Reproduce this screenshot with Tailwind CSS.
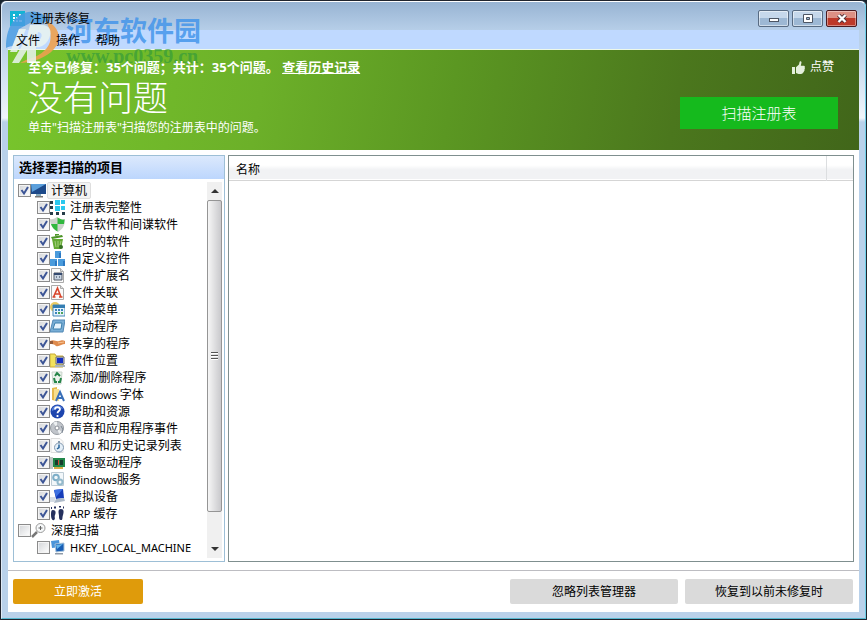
<!DOCTYPE html>
<html lang="zh-CN">
<head>
<meta charset="utf-8">
<title>注册表修复</title>
<script src="https://cdn.jsdelivr.net/npm/@tailwindcss/browser@4"></script>
</head>
<body class="h-screen overflow-hidden bg-[#16222c] font-['Noto_Sans','Noto_Sans_CJK_SC',sans-serif] text-xs text-black">
<div class="relative flex h-full flex-col rounded-t-md border border-[#20242e] bg-[#b9d1ea]">
 <div class="flex min-h-0 flex-1 flex-col rounded-t-md border border-t-white border-r-[#6fd0e8] border-b-[#55b8d0] border-l-[#dfeaf6] bg-[linear-gradient(to_bottom,#b9d1ea_40px,#f0f5fa_116px,#b9d1ea_120px)] px-[6px] pb-[6px]">

  <header class="-mx-[6px] flex h-7 shrink-0 items-center rounded-t-md bg-linear-to-b from-[#98b4d3] to-[#b6cee8] pr-2 pl-2">
   <svg class="mt-1 size-[15px]" viewBox="0 0 15 15"><path fill="#13b4d4" d="M0 0h15v15H0z"/><path fill="#fff" d="M3 3h2v2H3zM3 6h2v2H3zM3 9h2v2H3zM6 6h2v2H6zM6 9h2v2H6zM9 3h2v2H9zM9 9h3v2H9z"/></svg>
   <h1 class="relative z-20 mt-[5px] ml-[5px]">注册表修复</h1>
   <div class="mt-[5px] ml-auto flex gap-[3px]">
    <button aria-label="最小化" class="grid h-[17px] w-[31px] place-items-center rounded-xs border border-[#586b82] bg-linear-to-b from-[#c6d8eb] from-50% to-[#9db8d4] to-50% ring-1 ring-white/50 ring-inset"><svg class="h-[9px] w-3" viewBox="0 0 12 9"><rect x="1.5" y="4.5" width="9" height="3" fill="#fff" stroke="#4c5563"/></svg></button>
    <button aria-label="最大化" class="grid h-[17px] w-[31px] place-items-center rounded-xs border border-[#586b82] bg-linear-to-b from-[#c6d8eb] from-50% to-[#9db8d4] to-50% ring-1 ring-white/50 ring-inset"><svg class="h-[9px] w-3" viewBox="0 0 12 9"><path fill="#fff" fill-rule="evenodd" stroke="#4c5563" d="M1.500.5h9v8h-9zM4.500 3.500v2h3v-2z"/></svg></button>
    <button aria-label="关闭" class="grid h-[17px] w-[31px] place-items-center rounded-xs border border-[#4b1a20] bg-linear-to-b from-[#dc9084] from-50% to-[#bd3929] to-50% ring-1 ring-white/40 ring-inset"><svg class="h-[9px] w-3" viewBox="0 0 12 9"><path d="M2.500 1l7 7M9.500 1l-7 7" stroke="#4c3038" stroke-width="4"/><path d="M2.500 1l7 7M9.500 1l-7 7" stroke="#fff" stroke-width="2.400"/></svg></button>
   </div>
  </header>

  <nav class="flex h-5 shrink-0 items-center gap-4 border-b border-[#eef8e8] bg-[#bfd9ff] pt-[2px] pl-2">
   <button class="relative z-20">文件</button><button class="relative z-20">操作</button><button class="relative z-20">帮助</button>
  </nav>

  <main class="flex min-h-0 flex-1 flex-col bg-white">
   <section class="flex h-[100px] shrink-0 justify-between bg-[linear-gradient(100deg,#78c52c,#6cb029_30%,#5b9722_52%,#4b771d_78%,#41661a)] pr-[21px] pl-5 text-white">
    <div class="relative z-20 pt-[7px]">
     <p class="text-[13px] leading-5 font-bold">至今已修复：35个问题；共计：35个问题。 <a href="#" class="underline">查看历史记录</a></p>
     <h2 class="text-[35px] leading-[42px] font-light">没有问题</h2>
     <p class="leading-[18px]"><span>单击"扫描注册表"扫描您的注册表中的问题。</span></p>
    </div>
    <div class="flex flex-col items-end gap-5 pt-[7px]">
     <button class="mr-1 flex h-5 items-center gap-[5px]">
      <svg class="size-[13px]" viewBox="0 0 13 13" fill="#e4efdc"><path d="M0 6h3v7H0zM4 6.200L7 3.500 7.600.8C8-.2 9.500.2 9.500 1.500L8.800 4.800H12c1 .2 1.200 1.300.6 1.900.5.600.4 1.400-.2 1.800.3.700.1 1.400-.5 1.700.1.800-.3 1.300-1 1.500-.3.800-.9 1.200-1.800 1.200H6.500L4 12z"/></svg>
      点赞</button>
     <button class="h-8 w-[158px] bg-[#15ba1d] text-[15px] font-light">扫描注册表</button>
    </div>
   </section>

   <div class="flex min-h-0 flex-1 gap-[3px] px-[5px] pt-[5px] pb-2">
    <aside class="flex w-[212px] shrink-0 flex-col border border-[#9dbfd6]">
     <h3 class="h-[23px] shrink-0 bg-linear-to-b from-[#dce9fc] to-[#bcd6fd] pl-[5px] text-[13px] leading-[23px] font-bold">选择要扫描的项目</h3>
     <div class="flex min-h-0 flex-1 pt-[3px] pr-[2px] pb-[3px]">
      <ul id="tree" class="min-w-0 flex-1 overflow-hidden pl-1"></ul>
      <div class="flex w-[15px] flex-col bg-[#f0f0f0]">
       <button aria-label="向上滚动" class="grid h-[18px] place-items-center"><svg class="h-1 w-2" viewBox="0 0 8 4"><path fill="#333" d="M0 4l4-4 4 4z"/></svg></button>
       <div class="grid flex-[312] place-items-center rounded-xs border border-[#959595] bg-linear-to-r from-[#f6f6f6] to-[#c9c9cc]"><svg class="h-2 w-[7px]" viewBox="0 0 7 8"><path d="M0 .5h7M0 3.500h7M0 6.500h7" stroke="#555"/><path d="M0 1.500h7M0 4.500h7M0 7.500h7" stroke="#fff"/></svg></div>
       <div class="flex-[28]"></div>
       <button aria-label="向下滚动" class="grid h-[18px] place-items-center"><svg class="h-1 w-2" viewBox="0 0 8 4"><path fill="#333" d="M0 0l4 4 4-4z"/></svg></button>
      </div>
     </div>
    </aside>
    <section class="min-w-0 flex-1 border border-[#7f8f8f]">
     <table class="w-full table-fixed border-collapse">
      <thead><tr class="h-6 border-b border-[#d5d5d5] bg-linear-to-b from-white from-40% to-[#f1f2f4] to-60%">
       <th class="border-r border-[#dcdee0] pt-1 pl-[7px] text-left font-normal">名称</th><th class="w-[27px]"></th>
      </tr></thead>
      <tbody></tbody>
     </table>
    </section>
   </div>

   <footer class="flex h-[42px] shrink-0 items-center gap-[7px] border-t border-[#bdbdc2] px-[5px]">
    <button class="mr-auto h-[25px] w-[130px] rounded-xs bg-[#df9b0b] text-white">立即激活</button>
    <button class="h-[25px] w-[168px] rounded-xs bg-[#dadada]">忽略列表管理器</button>
    <button class="mr-px h-[25px] w-[168px] rounded-xs bg-[#dadada]">恢复到以前未修复时</button>
   </footer>
  </main>
 </div>

 <!-- translucent site mark, under the window's texts -->
 <div class="pointer-events-none absolute top-2 left-1 z-10 flex">
  <svg class="h-[60px] w-[58px]" viewBox="0 0 58 60">
   <path fill="#4a9be0" fill-opacity=".85" d="M1 39C1 20 8 6 23 3c9-2 17 2 21 9l-7 2H25L14 20 8 37c-3 0-5 1-7 2z"/>
   <path fill="#eda04f" fill-opacity=".9" d="M41 12c13 5 17 18 8 28-8 9-20 13-34 14l6-3c12-3 21-9 24-18 2-8-1-14-4-21z"/>
   <path fill="#e9f3f0" fill-opacity=".85" d="M14 20h7l-9 23H5zM25 16h12c7 0 10 5 8 11-2 7-8 12-14 11v16h-9V41l-8 13h-7l15-26zm8 7-2 9c6 0 8-9 2-9z"/>
  </svg>
  <div class="pt-[5px]">
   <p class="ml-[3px] font-['Noto_Sans_CJK_SC',sans-serif] text-[27px] leading-8 font-bold text-[#3b91ea]/80">河东软件园</p>
   <p class="ml-[3px] font-['Liberation_Serif',serif] text-[20px] leading-5 font-bold text-[#2f983c]/65">www.pc0359.cn</p>
  </div>
 </div>
</div>

<script>
const doc = '<path d="M1.500.5h9l3 3v11h-12z" fill="#fafafa" stroke="#aaa"/><path d="M10.500.5v3h3" fill="#ddd" stroke="#aaa"/>';
const icons = {
 pc: '<path d="M0 1h15v10H0z" fill="#1e4a8a"/><path d="M0 1h15L1 9z" fill="#5b9fdb"/><path d="M5 11h5v2H5z" fill="#8ab"/><path d="M4 13h8v1.500H4z" fill="#777"/>',
 blocks: '<path fill="#243c48" d="M0 1h3v3H0zM0 6h3v3H0zM0 12h3v3H0zM6 12h3v3H6zM12 12h3v3h-3z"/><path fill="#2cc8ee" d="M5 0h5v5H5zM11 0h4v4h-4zM5 6h5v5H5zM11 6h4v4h-4z"/>',
 shield: '<path d="M0 2c3 1 5-1 7-2 3 2 5 3 8 2 0 6-2 10-7 13C3 12 0 8 0 2z" fill="#ccd3cc"/><path d="M7.500.5C10 2 12 3 14.500 2.500L14 7H7.500zM1 7h6.500v7.500C4 13 2 10 1 7z" fill="#30b83e"/>',
 bin: '<path d="M2 5h11l-2 10H4z" fill="#64aa33"/><path d="M1 3l11-2 1 2-11 2zM5 2V0h4v1" fill="#4c9427"/><path d="M5 7l1 6M8 7v6M11 7l-1 4" stroke="#a5d080"/><circle cx="11" cy="13" r="2" fill="#346f25"/>',
 cubes: '<path fill="#4a9bdc" d="M5 0h6v7H5zM0 8h7v7H0zM8 8h7v7H8z"/><path fill="#2c79c3" d="M9 2h2v5H9zM5 10h2v5H5zM13 10h2v5h-2z"/>',
 ext: doc + '<path d="M4 5h8v7H4z" fill="#c8d4e3" stroke="#555b66"/><path d="M4 5h8v2H4z" fill="#344a70"/><path d="M6 9h1M9 9h1" stroke="#234"/>',
 font: doc + '<path d="M3.500 12L7.500 3l3.500 9M5 9h5M2.500 12h3M9 12h3.500" fill="none" stroke="#d8452b" stroke-width="1.600"/>',
 start: '<circle cx="5" cy="5" r="5" fill="#eacb63"/><path d="M3 3h12v11H3z" fill="#e7f2fb" stroke="#4388b8"/><path d="M3 3h12v3H3z" fill="#347eb3"/><path fill="#3a86bd" d="M5 7h2v2H5zM8 7h2v2H8zM11 7h2v2h-2zM5 10h2v2H5z"/><path fill="#4ba35d" d="M8 10h2v2H8zM11 10h2v2h-2z"/>',
 run: '<path d="M3 1h12l-2 12H0z" fill="#78add5" stroke="#5088b5"/><path d="M5 4h7l-1 6H3z" fill="#e5f3fd" stroke="#3d80ad"/>',
 hand: '<path d="M0 5c4-2 6 1 9 0s4-1 6 0v3c-3 0-6 3-9 2C4 8 2 8 0 8z" fill="#df8b4d"/><path d="M0 5h3v3H0z" fill="#945b39"/><path d="M8 7l6-1" stroke="#f7c28f"/>',
 folderpc: '<path d="M0 1h5l1 2h7v11H0z" fill="#f1e25b" stroke="#c8aa39"/><path d="M6 4h8v7H6z" fill="#c8d1d8" stroke="#667"/><path d="M7 5h6v5H7z" fill="#152fc0"/><path d="M5 12h10v2H5z" fill="#aab4bb"/>',
 recycle: '<path d="M2 2h10l-1 12H3z" fill="#edf3ed" stroke="#c9d4cc"/><path d="M5 6l2-3 3 3M11 8l-1 4H8M4 8l1 4h2" fill="none" stroke="#258448" stroke-width="2"/>',
 fontdir: '<path d="M2 1l5-1v14l-5-1z" fill="#e5b94c"/><path d="M4 2h5v12H4z" fill="#f7df8c"/><path d="M6 14l4-9 4 9M8 11h5" fill="none" stroke="#396fb8" stroke-width="2"/>',
 help: '<circle cx="7.500" cy="7.500" r="7" fill="#1d45ae"/><path d="M2 5a6 6 0 0111 0c-4-1-7 0-11 2z" fill="#5681d9"/><path d="M5 5.500c0-3 5-3 5-.3 0 1.800-2.500 1.800-2.500 4M7.500 11v2" fill="none" stroke="#fff" stroke-width="1.800"/>',
 disc: '<circle cx="7" cy="7" r="6.500" fill="#c1c5cb" stroke="#969ba2"/><path d="M7 7L3 1.500 7 .5zM7 7l5 4-3 2z" fill="#edf0f2"/><circle cx="7" cy="7" r="2" fill="#fff" stroke="#8b9098"/><path d="M11 5q3 3 1 7" stroke="#7c8794" fill="none"/>',
 clock: '<path d="M1 .5h9l3 3v11H1z" fill="#fafafa" stroke="#ddd"/><circle cx="9" cy="9.500" r="4.500" fill="#e4eff8" stroke="#8399b0"/><path d="M9 6.500v3L7 11" stroke="#27649a" stroke-width="1.500" fill="none"/><path d="M8 3h2v2H8z" fill="#8297ab"/>',
 card: '<path d="M0 2h3v12H0z" fill="#bdc5c3"/><path d="M3 3h12v9H3z" fill="#21874a"/><path d="M5 5h3v5H5zM10 5h3v5h-3z" fill="#153d2c"/><path d="M4 12h9v2H4z" fill="#d5ac46"/><path d="M8 5h1v5H8z" fill="#d24a34"/>',
 gears: '<path d="M1.500.5h12v13h-12z" fill="#f2f7fa" stroke="#bdcbd4"/><circle cx="6" cy="5.500" r="2.800" fill="none" stroke="#7daec8" stroke-width="2"/><circle cx="10" cy="10" r="2.500" fill="none" stroke="#92b9cb" stroke-width="2"/>',
 laptop: '<path d="M4 1l9-1 1 9-8 1z" fill="#163db9"/><path d="M4 1l9-1-7 8z" fill="#3d70e1"/><path d="M6 10l8-1 1 3-11 2z" fill="#adbac9"/><path d="M0 8h5v5H0z" fill="#d5dde6"/>',
 feet: '<path d="M3 4c3 0 3 3 2 5s1 4-1 5-3-2-3-5S1 4 3 4zM11 3c3 0 3 3 2 6s0 5-2 5-2-2-2-4-2-7 2-7z" fill="#25305e"/><path d="M1 2h1M4 1.500h2M9 .5h2M13 1.500h1" stroke="#25305e" stroke-width="2"/>',
 zoom: '<path d="M1 14l5-5" stroke="#777" stroke-width="2.500"/><circle cx="9.500" cy="5" r="4.500" fill="#f6f8f9" stroke="#999"/><path d="M7.500 5h4M9.500 3v4" stroke="#666"/>',
 netpc: '<path d="M1 1l8-1 1 7-8 1z" fill="#4a94d9"/><path d="M5 4l9-1v8l-8 1z" fill="#175db4" stroke="#a8c4dc"/><path d="M6 5l7-1-6 5z" fill="#62b4ec"/><path d="M5 13h8v1.500H5z" fill="#8e9aa8"/>'
};
const rows = [
 [0,1,'pc','计算机'],[1,1,'blocks','注册表完整性'],[1,1,'shield','广告软件和间谍软件'],[1,1,'bin','过时的软件'],[1,1,'cubes','自定义控件'],
 [1,1,'ext','文件扩展名'],[1,1,'font','文件关联'],[1,1,'start','开始菜单'],[1,1,'run','启动程序'],[1,1,'hand','共享的程序'],[1,1,'folderpc','软件位置'],
 [1,1,'recycle','添加/删除程序'],[1,1,'fontdir','Windows 字体'],[1,1,'help','帮助和资源'],[1,1,'disc','声音和应用程序事件'],[1,1,'clock','MRU 和历史记录列表'],
 [1,1,'card','设备驱动程序'],[1,1,'gears','Windows服务'],[1,1,'laptop','虚拟设备'],[1,1,'feet','ARP 缓存'],[0,0,'zoom','深度扫描'],[1,0,'netpc','HKEY_LOCAL_MACHINE']
];
const latin = text => text.replace(/[A-Za-z_]+ ?/g, '<span class="text-[11px]">$&</span>');
document.getElementById('tree').innerHTML = rows.map(([depth, on, icon, text], i) => `
 <li class="${depth ? 'pl-[19px]' : ''}"><label class="flex h-[17px] items-center whitespace-nowrap">
  <span class="relative flex"><input type="checkbox" ${on ? 'checked' : ''} class="peer size-[13px] appearance-none border border-[#8b8b8b] bg-linear-to-br from-[#d3d5d8] to-white ring-1 ring-[#f4f4f4] ring-inset">
  <svg class="pointer-events-none absolute inset-0 hidden size-[13px] peer-checked:block" viewBox="0 0 13 13"><path d="M3.500 6l2.500 3.500L10 3" fill="none" stroke="#3c5596" stroke-width="2"/></svg></span>
  <svg class="size-[15px]" viewBox="0 0 15 15">${icons[icon]}</svg>
  <span class="${i ? 'ml-[5px] pt-px leading-4' : 'ml-px rounded-xs border border-[#dedede] bg-[#f3f3f3] px-[3px] leading-[15px]'}">${latin(text)}</span></label></li>`).join('');
</script>
</body>
</html>
